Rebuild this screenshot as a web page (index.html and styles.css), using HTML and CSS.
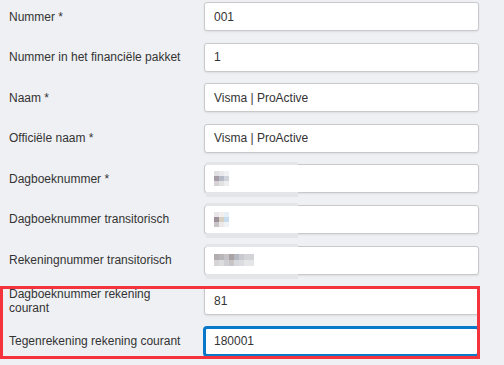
FILE: index.html
```html
<!DOCTYPE html>
<html lang="nl">
<head>
<meta charset="utf-8">
<link rel="stylesheet" href="styles.css">
</head>
<body>
<form class="form">
  <div class="row"><label class="lbl">Nummer *</label><input class="inp" value="001"></div>
  <div class="row"><label class="lbl">Nummer in het financiële pakket</label><input class="inp" value="1"></div>
  <div class="row"><label class="lbl">Naam *</label><input class="inp" value="Visma | ProActive"></div>
  <div class="row"><label class="lbl">Officiële naam *</label><input class="inp" value="Visma | ProActive"></div>
  <div class="row"><label class="lbl">Dagboeknummer *</label>
    <div class="inp fake"><span class="px px-a"></span><span class="band"></span></div></div>
  <div class="row"><label class="lbl">Dagboeknummer transitorisch</label>
    <div class="inp fake"><span class="px px-b"></span><span class="band"></span></div></div>
  <div class="row"><label class="lbl">Rekeningnummer transitorisch</label>
    <div class="inp fake"><span class="px px-c"></span><span class="band"></span></div></div>
  <div class="group">
    <div class="row"><label class="lbl">Dagboeknummer rekening courant</label><input class="inp" value="81"></div>
    <div class="row"><label class="lbl">Tegenrekening rekening courant</label><input class="inp focus" value="180001"></div>
  </div>
</form>
</body>
</html>
```
FILE: styles.css
```css
html, body {
  margin: 0;
  padding: 0;
  background: #eff0f4;
}
body {
  width: 504px;
  height: 365px;
  overflow: hidden;
  font-family: "Liberation Sans", Arial, sans-serif;
  font-size: 12px;
  color: #333;
}
.form {
  display: flex;
  flex-direction: column;
  gap: 11.6px;
  padding: 2px 0 0 9px;
}
.group {
  display: flex;
  flex-direction: column;
  gap: 11.6px;
  position: relative;
}
.group::after {
  content: "";
  position: absolute;
  left: -9px;
  top: 0;
  width: 474px;
  height: 67px;
  border: 3px solid #f5333d;
  pointer-events: none;
}
.row {
  display: flex;
  align-items: center;
  min-height: 29px;
}
.lbl {
  width: 195px;
  line-height: 14px;
  padding-right: 12px;
  box-sizing: border-box;
}
.inp {
  width: 275px;
  height: 29px;
  box-sizing: border-box;
  border: 1px solid #c9c9cc;
  border-radius: 3px;
  background: #fff;
  box-shadow: 0 1px 2px rgba(0,0,0,0.08);
  padding: 0 9px;
  font-family: "Liberation Sans", Arial, sans-serif;
  font-size: 12px;
  color: #333;
  outline: none;
  margin: 0;
}
.inp.focus {
  border: 2px solid #0a79c9;
  box-shadow: 0 0 0 1px #0a79c9;
  padding: 0 8px;
}
.fake {
  position: relative;
  display: flex;
  align-items: center;
}
.band {
  position: absolute;
  left: 1px;
  top: -3px;
  width: 92px;
  height: 35px;
  background: linear-gradient(#e4e5e8 0 3px, transparent 3px 30px, #e4e5e8 30px);
  pointer-events: none;
}
.px {
  display: block;
  height: 15px;
}
.px-a {
  width: 15px;
  background:
    linear-gradient(90deg, #e2dfe2 0 5px, #e9e9ec 5px 10px, #f0f1f3 10px) 0 0/15px 5px no-repeat,
    linear-gradient(90deg, #a69da7 0 5px, #b6bac6 5px 10px, #cfd3da 10px) 0 5px/15px 5px no-repeat,
    linear-gradient(90deg, #d6d2d6 0 5px, #e2e2e5 5px 10px, #eceef0 10px) 0 10px/15px 5px no-repeat;
}
.px-b {
  width: 15px;
  background:
    linear-gradient(90deg, #e8e6e8 0 5px, #f1f0ee 5px 10px, #e6eef6 10px) 0 0/15px 5px no-repeat,
    linear-gradient(90deg, #9d9299 0 5px, #d8cfc3 5px 10px, #c8dcef 10px) 0 5px/15px 5px no-repeat,
    linear-gradient(90deg, #c9c4c8 0 5px, #ebe9e9 5px 10px, #f0f3f6 10px) 0 10px/15px 5px no-repeat;
}
.px-c {
  width: 40px;
  height: 12px;
  background:
    linear-gradient(90deg, #b2adaf 0 5px, #b9b6b9 5px 10px, #c4c2c6 10px 15px, #aaa1a2 15px 20px, #b7b9c2 20px 25px, #c8cad0 25px 30px, #d3d4d8 30px) 0 0/40px 6px no-repeat,
    linear-gradient(90deg, #d6d4d6 0 5px, #dcdcdf 5px 10px, #cfcfd3 10px 15px, #c9c5c7 15px 20px, #d7d9de 20px 25px, #dcdde1 25px 30px, #e6e6e9 30px) 0 6px/40px 6px no-repeat;
}
```
